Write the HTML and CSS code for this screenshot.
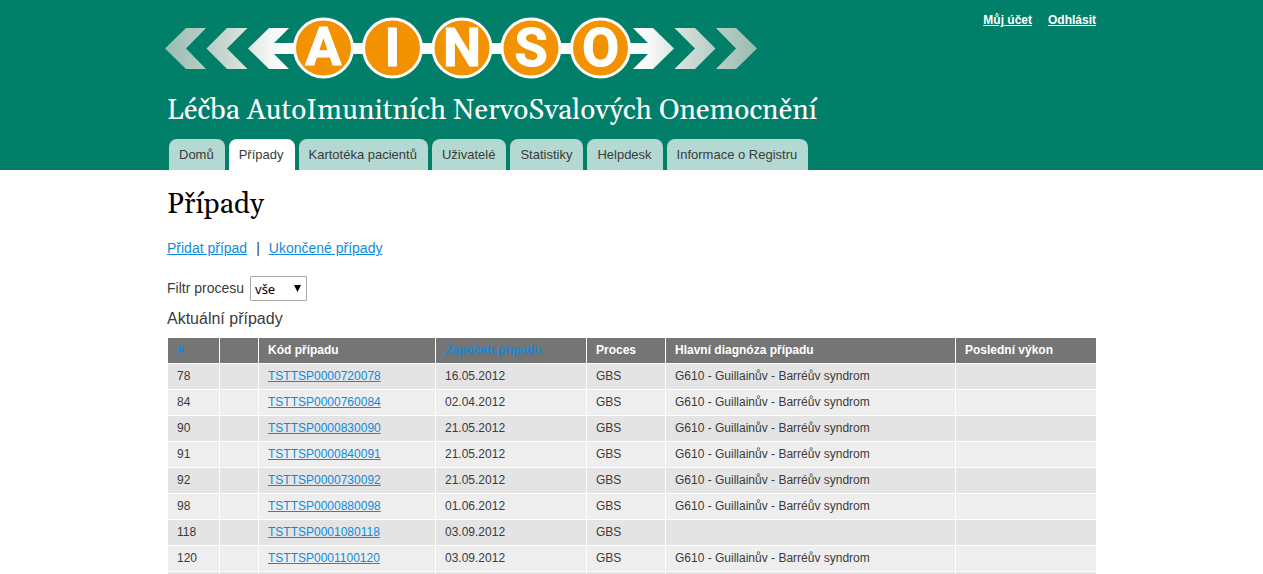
FILE: index.html
```html
<!DOCTYPE html>
<html lang="cs">
<head>
<meta charset="utf-8">
<meta name="viewport" content="width=device-width, initial-scale=1">
<title>Případy | AINSO</title>
<link rel="stylesheet" href="styles.css">
</head>
<body>
<header class="header">
  <div class="container header-inner">
    <div class="header-top">
      <svg class="logo" width="594" height="64" viewBox="164 16 594 64" role="img" aria-label="AINSO">
        <defs>
          <linearGradient id="fade-left" gradientUnits="userSpaceOnUse" x1="165" y1="0" x2="289" y2="0">
            <stop offset="0" stop-color="#9abcb0"/><stop offset="0.5" stop-color="#c8d8d1"/><stop offset="0.85" stop-color="#f4f7f5"/><stop offset="1" stop-color="#fff"/>
          </linearGradient>
          <linearGradient id="fade-right" gradientUnits="userSpaceOnUse" x1="757" y1="0" x2="633" y2="0">
            <stop offset="0" stop-color="#9abcb0"/><stop offset="0.5" stop-color="#c8d8d1"/><stop offset="0.85" stop-color="#f4f7f5"/><stop offset="1" stop-color="#fff"/>
          </linearGradient>
        </defs>
        <path fill="url(#fade-left)" d="M165 48.500L186 28H206L186 48.500L206 69H186ZM206.500 48.500L227 28H247.500L227 48.500L247.500 69H227ZM248 48.500L269 28H289L274 43H296V54H274L289 69H269Z"/>
        <path fill="url(#fade-right)" d="M757 48.500L736 28H716L736 48.500L716 69H736ZM715.500 48.500L695 28H674.500L695 48.500L674.500 69H695ZM674 48.500L653 28H633L648 43H626V54H648L633 69H653Z"/>
        <path fill="#fff" d="M323 43H600V54H323Z"/>
        <g fill="#f39200" stroke="#fff" stroke-width="3">
          <circle cx="323.500" cy="48" r="29"/><circle cx="392.500" cy="48" r="29"/><circle cx="462" cy="48" r="29"/><circle cx="531" cy="48" r="29"/><circle cx="600.500" cy="48" r="29"/>
        </g>
        <g class="logo-letters">
          <text x="323.500" y="65">A</text><text x="392.500" y="66">I</text><text x="462" y="66">N</text><text x="531" y="66">S</text><text x="600.500" y="66">O</text>
        </g>
      </svg>
      <nav class="user-menu">
        <a href="#">Můj účet</a>
        <a href="#">Odhlásit</a>
      </nav>
    </div>
    <div class="site-name">Léčba AutoImunitních NervoSvalových Onemocnění</div>
    <nav class="tabs">
      <a class="tab" href="#">Domů</a>
      <a class="tab tab-active" href="#" aria-current="page">Případy</a>
      <a class="tab" href="#">Kartotéka pacientů</a>
      <a class="tab" href="#">Uživatelé</a>
      <a class="tab" href="#">Statistiky</a>
      <a class="tab" href="#">Helpdesk</a>
      <a class="tab" href="#">Informace o Registru</a>
    </nav>
  </div>
</header>
<main class="container">
  <h1 class="page-title">Případy</h1>
  <div class="actions"><a href="#">Přidat případ</a><span>|</span><a href="#">Ukončené případy</a></div>
  <div class="filter">
    <label for="process">Filtr procesu</label>
    <span class="select-wrap">
      <select id="process" class="select"><option>vše</option></select>
      <svg class="select-arrow" width="7" height="7" viewBox="0 0 7 7" aria-hidden="true"><path d="M0 0H7L3.500 7Z"/></svg>
    </span>
  </div>
  <h2 class="section-title">Aktuální případy</h2>
  <table class="cases">
    <colgroup><col class="col-id"><col class="col-flag"><col class="col-code"><col class="col-date"><col class="col-process"><col class="col-diagnosis"><col></colgroup>
    <thead>
      <tr><th><a href="#">#</a></th><th></th><th>Kód případu</th><th><a href="#">Započetí případu</a></th><th>Proces</th><th>Hlavní diagnóza případu</th><th>Poslední výkon</th></tr>
    </thead>
    <tbody>
      <tr><td>78</td><td></td><td><a href="#">TSTTSP0000720078</a></td><td>16.05.2012</td><td>GBS</td><td>G610 - Guillainův - Barréův syndrom</td><td></td></tr>
      <tr><td>84</td><td></td><td><a href="#">TSTTSP0000760084</a></td><td>02.04.2012</td><td>GBS</td><td>G610 - Guillainův - Barréův syndrom</td><td></td></tr>
      <tr><td>90</td><td></td><td><a href="#">TSTTSP0000830090</a></td><td>21.05.2012</td><td>GBS</td><td>G610 - Guillainův - Barréův syndrom</td><td></td></tr>
      <tr><td>91</td><td></td><td><a href="#">TSTTSP0000840091</a></td><td>21.05.2012</td><td>GBS</td><td>G610 - Guillainův - Barréův syndrom</td><td></td></tr>
      <tr><td>92</td><td></td><td><a href="#">TSTTSP0000730092</a></td><td>21.05.2012</td><td>GBS</td><td>G610 - Guillainův - Barréův syndrom</td><td></td></tr>
      <tr><td>98</td><td></td><td><a href="#">TSTTSP0000880098</a></td><td>01.06.2012</td><td>GBS</td><td>G610 - Guillainův - Barréův syndrom</td><td></td></tr>
      <tr><td>118</td><td></td><td><a href="#">TSTTSP0001080118</a></td><td>03.09.2012</td><td>GBS</td><td></td><td></td></tr>
      <tr><td>120</td><td></td><td><a href="#">TSTTSP0001100120</a></td><td>03.09.2012</td><td>GBS</td><td>G610 - Guillainův - Barréův syndrom</td><td></td></tr>
      <tr><td></td><td></td><td></td><td></td><td></td><td></td><td></td></tr>
    </tbody>
  </table>
</main>
</body>
</html>
```
FILE: styles.css
```css
* { box-sizing: border-box; }
body {
  margin: 0;
  height: 100vh;
  overflow: hidden;
  background: #fff;
  color: #3b3b3b;
  font-family: "Liberation Sans", Arial, sans-serif;
  font-size: 14px;
  line-height: 20px;
}
a { color: #0f8bdc; }
.container {
  max-width: 961px;
  margin: 0 auto;
  padding: 0 15px 0 16px;
}
.header { background: #027f68; }
.header-top {
  display: flex;
  justify-content: space-between;
  align-items: flex-start;
  padding-top: 16px;
}
.logo { margin-left: -3px; flex: none; }
.logo-letters {
  fill: #fff;
  stroke: #fff;
  stroke-width: 1px;
  font-family: Roboto, "Liberation Sans", sans-serif;
  font-size: 54px;
  font-weight: 700;
  text-anchor: middle;
}
.user-menu {
  display: flex;
  gap: 16px;
  padding-right: 1px;
  font-size: 12px;
  font-weight: 700;
  line-height: 8px;
}
.user-menu a { color: #fff; }
.site-name {
  margin-top: 12px;
  color: #fff;
  font-family: Gelasio, Georgia, "Liberation Serif", serif;
  font-size: 28px;
  line-height: 38px;
}
.tabs {
  display: flex;
  gap: 4px;
  margin-top: 9px;
  padding-left: 2px;
}
.tab {
  padding: 0 11px 0 10px;
  border-radius: 8px 8px 0 0;
  background: #b3d9d2;
  color: #3b3b3b;
  font-size: 13px;
  line-height: 31px;
  text-decoration: none;
  white-space: nowrap;
}
.tab-active { background: #fff; }
.page-title {
  margin: 18px 0 0;
  color: #000;
  font-family: Gelasio, Georgia, "Liberation Serif", serif;
  font-size: 28px;
  font-weight: 400;
  line-height: 34px;
}
.actions {
  display: flex;
  gap: 9px;
  margin-top: 16px;
}
.filter {
  display: flex;
  align-items: flex-start;
  gap: 6px;
  margin-top: 18px;
  line-height: 24px;
}
.select-wrap { position: relative; display: flex; }
.select {
  width: 57px;
  height: 25px;
  padding: 0 4px;
  border: 1px solid #a9a9a9;
  border-radius: 1px;
  background: #fff;
  color: #000;
  font-family: "Noto Sans", sans-serif;
  font-size: 13px;
  appearance: none;
}
.select-arrow {
  position: absolute;
  top: 9px;
  right: 6px;
  pointer-events: none;
}
.section-title {
  margin: 8px 0;
  font-size: 16px;
  font-weight: 400;
  line-height: 20px;
}
.cases {
  width: 100%;
  table-layout: fixed;
  border-spacing: 1px;
  font-size: 12px;
  line-height: 15px;
  text-align: left;
}
.cases th, .cases td {
  height: 25px;
  padding: 5px 9px;
  white-space: nowrap;
}
.cases th { background: #757575; color: #fff; }
.cases td { background: #eee; }
.cases tbody tr:nth-child(odd) td { background: #e4e4e4; }
.col-id { width: 51px; }
.col-flag { width: 38px; }
.col-code { width: 176px; }
.col-date { width: 150px; }
.col-process { width: 78px; }
.col-diagnosis { width: 289px; }
```
